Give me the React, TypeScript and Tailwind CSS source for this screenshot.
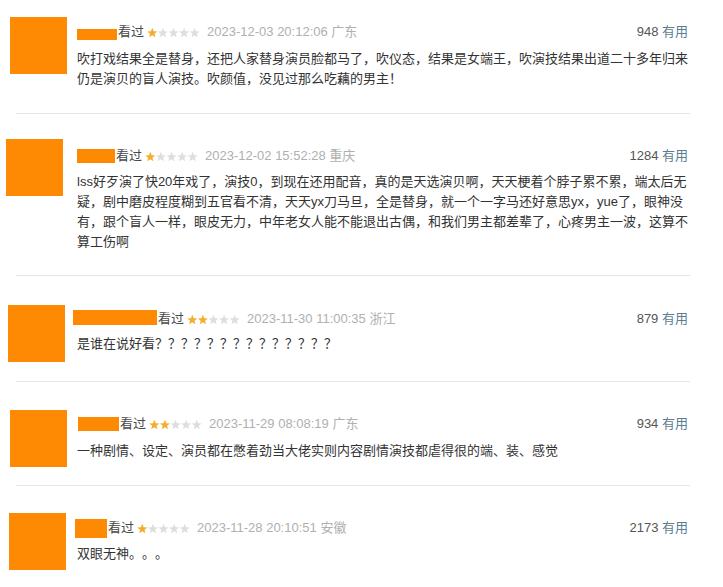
import React from 'react'

const Stars = ({ n }: { n: number }) => {
    const pts = '5.3,0.3 6.7,3.7 10.3,3.9 7.5,6.2 8.4,9.8 5.3,7.8 2.2,9.8 3.1,6.2 0.3,3.9 3.9,3.7'
    return (
        <svg width="53" height="11" viewBox="0 0 53 11" className="shrink-0">
            {[0, 1, 2, 3, 4].map((i) => (
                <polygon key={i} points={pts} transform={`translate(${i * 10.6} 0.5)`} fill={i < n ? '#f4ad2f' : '#dedede'} />
            ))}
        </svg>
    )
}

type Review = {
    stars: number
    date: string
    place: string
    votes: string
    lines: string[]
    blockH: string
    avatarPl: string
    avatarMt: string
    headPt: string
    textMt: string
    bar: string
}

const reviews: Review[] = [
    {
        stars: 1, date: '2023-12-03 20:12:06', place: '广东', votes: '948',
        lines: ['吹打戏结果全是替身，还把人家替身演员脸都马了，吹仪态，结果是女端王，吹演技结果出道二十多年归来', '仍是演贝的盲人演技。吹颜值，没见过那么吃藕的男主！'],
        blockH: 'h-[113px]', avatarPl: 'pl-[10px]', avatarMt: 'mt-[17px]', headPt: 'pt-[22px]', textMt: 'mt-[7px]',
        bar: 'w-[40px] h-[11px] translate-y-[2px]',
    },
    {
        stars: 1, date: '2023-12-02 15:52:28', place: '重庆', votes: '1284',
        lines: [
            'lss好歹演了快20年戏了，演技0，到现在还用配音，真的是天选演贝啊，天天梗着个脖子累不累，端太后无',
            '疑，剧中磨皮程度糊到五官看不清，天天yx刀马旦，全是替身，就一个一字马还好意思yx，yue了，眼神没',
            '有，跟个盲人一样，眼皮无力，中年老女人能不能退出古偶，和我们男主都差辈了，心疼男主一波，这算不',
            '算工伤啊',
        ],
        blockH: 'h-[161px]', avatarPl: 'pl-[6px]', avatarMt: 'mt-[25px]', headPt: 'pt-[32px]', textMt: 'mt-[6px]',
        bar: 'w-[38px] h-[14px]',
    },
    {
        stars: 2, date: '2023-11-30 11:00:35', place: '浙江', votes: '879',
        lines: ['是谁在说好看？？？？？？？？？？？？？？'],
        blockH: 'h-[105px]', avatarPl: 'pl-[8px]', avatarMt: 'mt-[29px]', headPt: 'pt-[33px]', textMt: 'mt-[5px]',
        bar: 'w-[84px] h-[15px] -ml-[4px] -translate-y-[2px]',
    },
    {
        stars: 2, date: '2023-11-29 08:08:19', place: '广东', votes: '934',
        lines: ['一种剧情、设定、演员都在憋着劲当大佬实则内容剧情演技都虐得很的端、装、感觉'],
        blockH: 'h-[103px]', avatarPl: 'pl-[10px]', avatarMt: 'mt-[28px]', headPt: 'pt-[32px]', textMt: 'mt-[7px]',
        bar: 'w-[41px] h-[14px] ml-[1px]',
    },
    {
        stars: 1, date: '2023-11-28 20:10:51', place: '安徽', votes: '2173',
        lines: ['双眼无神。。。'],
        blockH: 'h-[101px]', avatarPl: 'pl-[9px]', avatarMt: 'mt-[27px]', headPt: 'pt-[32px]', textMt: 'mt-[6px]',
        bar: 'w-[32px] h-[19px] -ml-[2px]',
    },
]

const ReviewItem = ({ r }: { r: Review }) => (
    <div className={`flex ${r.blockH}`}>
        <div className={`w-[77px] shrink-0 ${r.avatarPl}`}>
            <div className={`w-[57px] h-[57px] bg-[#fe8a03] ${r.avatarMt}`}></div>
        </div>
        <div className={`flex flex-col flex-1 pr-[35px] ${r.headPt}`}>
            <div className="flex items-center h-[20px] whitespace-nowrap">
                <div className={`bg-[#fe8a03] shrink-0 ${r.bar}`}></div>
                <span className="text-[13px] text-[#494949] ml-[1px]">看过</span>
                <span className="ml-[3px] flex"><Stars n={r.stars} /></span>
                <span className="ml-[7px] text-[13px] text-[#b0b0b0]">{r.date} {r.place}</span>
                <span className="ml-auto text-[13px] text-[#555555]">
                    {r.votes} <span className="text-[#5c7d90]">有用</span>
                </span>
            </div>
            <div className={`flex flex-col text-[13px] leading-[20px] text-[#333333] [text-spacing-trim:space-all] ${r.textMt}`}>
                {r.lines.map((l, i) => (
                    <div key={i} className="whitespace-nowrap">{l}</div>
                ))}
            </div>
        </div>
    </div>
)

const App = () => {
    return (
        <div className="w-[723px] h-[587px] overflow-hidden bg-white" style={{ fontFamily: '"Liberation Sans", "Noto Sans CJK SC", sans-serif' }}>
            {reviews.map((r, i) => (
                <div key={i}>
                    <ReviewItem r={r} />
                    {i < reviews.length - 1 && <div className="ml-[16px] w-[674px] h-px bg-[#e6e6e6]"></div>}
                </div>
            ))}
        </div>
    )
}

export default App
